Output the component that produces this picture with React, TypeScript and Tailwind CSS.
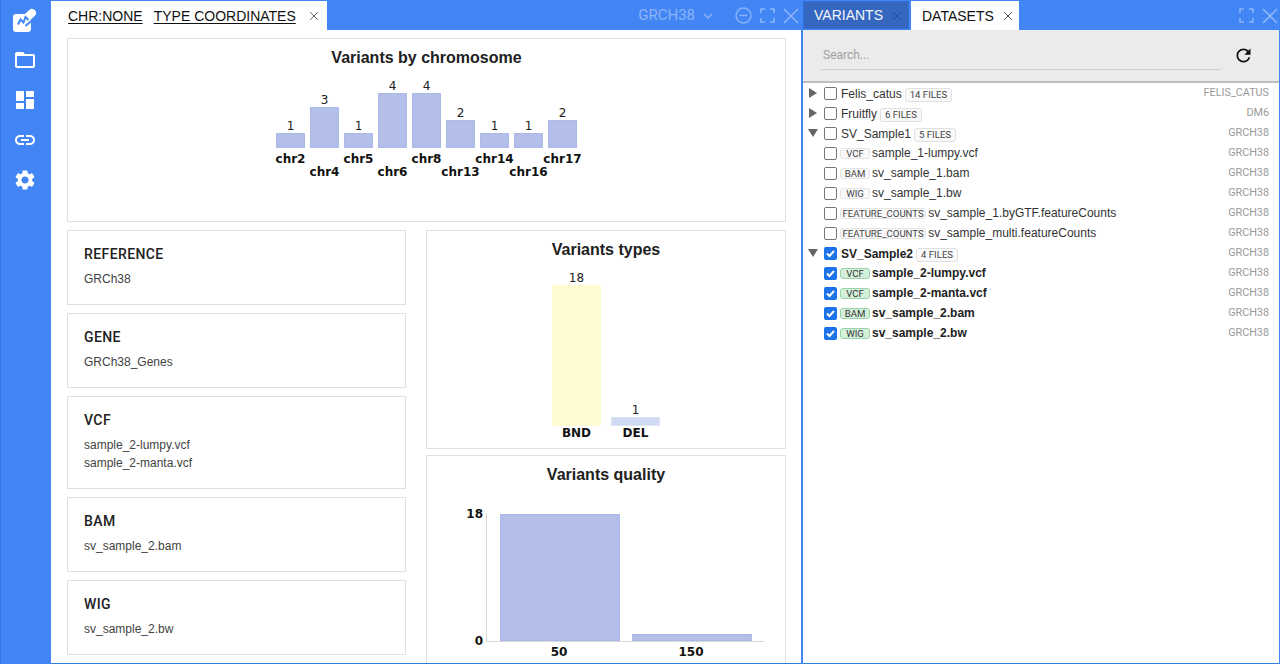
import { X } from 'lucide-react';

function Logo() {
  return (
    <svg width="24" height="24" viewBox="0 0 24 24">
      <rect x="0" y="6" width="18" height="18" rx="3" fill="#fff" />
      <path d="M9 14L19 5" stroke="#fff" strokeWidth="8" strokeLinecap="round" />
      <path d="M12.5 18L20.5 11" stroke="#4285f4" strokeWidth="2" />
      <path d="M5 16.5l2.5-5 3 3 2-5.5 3 3" fill="none" stroke="#4285f4" strokeWidth="2" />
    </svg>
  );
}

function NavIcon({ d }: { d: string }) {
  return (
    <svg width="24" height="24" viewBox="0 0 24 24" fill="#fff">
      <path d={d} />
    </svg>
  );
}

function FullscreenIcon() {
  return (
    <svg width="15" height="15" viewBox="0 0 15 15" fill="none" stroke="#8db4f8" strokeWidth="1.6">
      <path d="M1 5V1h4M10 1h4v4M14 10v4h-4M5 14H1v-4" />
    </svg>
  );
}

function CloseIcon() {
  return (
    <svg width="16" height="16" viewBox="0 0 16 16" fill="none" stroke="#8db4f8" strokeWidth="1.6">
      <path d="M1 1l14 14M15 1L1 15" />
    </svg>
  );
}

function Card({ title, items }: { title: string; items: string[] }) {
  return (
    <div className="border border-[#e0e0e0] px-4 pb-[16px] pt-[13px]">
      <div className="font-['Roboto'] text-[14px] font-medium leading-[20px] tracking-[0.4px] text-[#212121]">{title}</div>
      <div className="mt-[6px] text-[12px] leading-[18px] text-[#424242]">
        {items.map((i) => (
          <div key={i}>{i}</div>
        ))}
      </div>
    </div>
  );
}

const chrBars = [
  { v: 1, h: 15, l: 'chr2', low: false },
  { v: 3, h: 41, l: 'chr4', low: true },
  { v: 1, h: 15, l: 'chr5', low: false },
  { v: 4, h: 55, l: 'chr6', low: true },
  { v: 4, h: 55, l: 'chr8', low: false },
  { v: 2, h: 28, l: 'chr13', low: true },
  { v: 1, h: 15, l: 'chr14', low: false },
  { v: 1, h: 15, l: 'chr16', low: true },
  { v: 2, h: 28, l: 'chr17', low: false },
];

function ChrChart() {
  return (
    <div className="mt-[7px] flex justify-center gap-[5px]">
      {chrBars.map((b) => (
        <div key={b.l} className="flex w-[29px] flex-col items-center">
          <div className="flex h-[72px] w-full flex-col items-center justify-end">
            <div className="font-['DejaVu_Sans'] text-[12px] leading-[14px] text-[#212121]">{b.v}</div>
            <div className="w-full border border-[#adb9e6] bg-[#b3bfe8]" style={{ height: b.h }} />
          </div>
          <div
            className={`whitespace-nowrap font-['DejaVu_Sans'] text-[12px] font-bold leading-[14px] text-[#111] ${b.low ? 'mt-[17px]' : 'mt-[4px]'}`}
          >
            {b.l}
          </div>
        </div>
      ))}
    </div>
  );
}

function TypesChart() {
  return (
    <div className="ml-[125px] mt-[10px] flex gap-[10px]">
      <div className="flex w-[49px] flex-col items-center">
        <div className="font-['DejaVu_Sans'] text-[12px] leading-[14px] text-[#212121]">18</div>
        <div className="h-[141px] w-full bg-[#fffbd2]" />
        <div className="font-['DejaVu_Sans'] text-[12px] font-bold leading-[14px] text-[#111]">BND</div>
      </div>
      <div className="flex w-[49px] flex-col items-center justify-end">
        <div className="font-['DejaVu_Sans'] text-[12px] leading-[14px] text-[#212121]">1</div>
        <div className="h-[9px] w-full border border-[#dde4f6] bg-[#d0daf3]" />
        <div className="font-['DejaVu_Sans'] text-[12px] font-bold leading-[14px] text-[#111]">DEL</div>
      </div>
    </div>
  );
}

function QualityChart() {
  return (
    <div className="ml-[37px] mt-[27px] flex">
      <div className="flex h-[129px] w-[22px] flex-col justify-between pr-[3px] text-right font-['DejaVu_Sans'] text-[12px] font-bold leading-[14px] text-[#111]">
        <span className="-mt-[6px]">18</span>
        <span className="-mb-[6px]">0</span>
      </div>
      <div>
        <div className="flex h-[129px] w-[278px] items-end gap-[12px] border-b border-l border-[#d8d8d8] pl-[13px]">
          <div className="h-[127px] w-[120px] border border-[#adb9e6] bg-[#b3bfe8]" />
          <div className="h-[7px] w-[120px] border border-[#adb9e6] bg-[#b3bfe8]" />
        </div>
        <div className="mt-[3px] flex gap-[12px] pl-[13px] font-['DejaVu_Sans'] text-[12px] font-bold leading-[15px] text-[#111]">
          <span className="w-[120px] text-center">50</span>
          <span className="w-[120px] text-center">150</span>
        </div>
      </div>
    </div>
  );
}

type Row = {
  name: string;
  badge?: string;
  files?: string;
  ref: string;
  open?: boolean;
  checked?: boolean;
};

const rows: Row[] = [
  { name: 'Felis_catus', files: '14 FILES', ref: 'FELIS_CATUS', open: false },
  { name: 'Fruitfly', files: '6 FILES', ref: 'DM6', open: false },
  { name: 'SV_Sample1', files: '5 FILES', ref: 'GRCH38', open: true },
  { name: 'sample_1-lumpy.vcf', badge: 'VCF', ref: 'GRCH38' },
  { name: 'sv_sample_1.bam', badge: 'BAM', ref: 'GRCH38' },
  { name: 'sv_sample_1.bw', badge: 'WIG', ref: 'GRCH38' },
  { name: 'sv_sample_1.byGTF.featureCounts', badge: 'FEATURE_COUNTS', ref: 'GRCH38' },
  { name: 'sv_sample_multi.featureCounts', badge: 'FEATURE_COUNTS', ref: 'GRCH38' },
  { name: 'SV_Sample2', files: '4 FILES', ref: 'GRCH38', open: true, checked: true },
  { name: 'sample_2-lumpy.vcf', badge: 'VCF', ref: 'GRCH38', checked: true },
  { name: 'sample_2-manta.vcf', badge: 'VCF', ref: 'GRCH38', checked: true },
  { name: 'sv_sample_2.bam', badge: 'BAM', ref: 'GRCH38', checked: true },
  { name: 'sv_sample_2.bw', badge: 'WIG', ref: 'GRCH38', checked: true },
];

function Check({ on }: { on?: boolean }) {
  if (on) {
    return (
      <span className="flex h-[13px] w-[13px] shrink-0 items-center justify-center rounded-[2px] bg-[#1a73e8]">
        <svg width="11" height="11" viewBox="0 0 11 11" fill="none" stroke="#fff" strokeWidth="2">
          <path d="M2 5.5l2.5 2.5L9 3" />
        </svg>
      </span>
    );
  }
  return <span className="h-[13px] w-[13px] shrink-0 rounded-[2px] border border-[#767676] bg-white" />;
}

function TreeRow({ r }: { r: Row }) {
  return (
    <div className="flex h-[20px] items-center pl-[5px] pr-[10px]">
      <span className="flex w-[16px] shrink-0 items-center">
        {r.open === false && (
          <svg width="10" height="10" viewBox="0 0 10 10" fill="#666">
            <path d="M1 0l8 5-8 5z" />
          </svg>
        )}
        {r.open === true && (
          <svg width="10" height="10" viewBox="0 0 10 10" fill="#666">
            <path d="M0 1h10L5 9z" />
          </svg>
        )}
      </span>
      <Check on={r.checked} />
      {r.badge && (
        <span
          className={`ml-[3px] rounded-[3px] border font-['Roboto'] text-[9.6px] leading-[9px] ${r.badge === 'FEATURE_COUNTS' ? 'px-[1.5px]' : 'w-[30px] text-center'} ${
            r.checked ? 'border-[#9bd3a9] bg-[#d4f0da] text-[#333]' : 'border-[#e4e4e4] bg-[#f8f8f8] text-[#444]'
          }`}
        >
          {r.badge}
        </span>
      )}
      <span
        className={`${r.badge ? 'ml-[2px]' : 'ml-[4px] translate-y-px'} whitespace-nowrap text-[12px] ${r.checked ? 'font-bold text-[#222]' : 'text-[#333]'}`}
      >
        {r.name}
      </span>
      {r.files && (
        <span className="ml-[3px] translate-y-[2px] rounded-[3px] border border-[#e0e0e0] bg-[#fafafa] px-[4px] font-['Roboto'] text-[9.6px] leading-[12px] text-[#444]">
          {r.files}
        </span>
      )}
      <span className="ml-auto font-['Roboto'] text-[10.8px] text-[#9a9a9a]">{r.ref}</span>
    </div>
  );
}

export default function App() {
  return (
    <div className="flex h-[664px] w-[1280px] overflow-hidden bg-[#4285f4] font-['Liberation_Sans',sans-serif]">
      {/* nav rail */}
      <div className="flex w-[51px] shrink-0 flex-col items-center gap-[16px] border-l border-[#2f74e6] pr-[2px] pt-[8px]">
        <Logo />
        <NavIcon d="M20 6h-8l-2-2H4c-1.1 0-2 .9-2 2v12c0 1.1.9 2 2 2h16c1.1 0 2-.9 2-2V8c0-1.1-.9-2-2-2zm0 12H4V8h16v10z" />
        <NavIcon d="M3 13h8V3H3v10zm0 8h8v-6H3v6zm10 0h8V11h-8v10zm0-18v6h8V3h-8z" />
        <NavIcon d="M3.9 12c0-1.71 1.39-3.1 3.1-3.1h4V7H7c-2.76 0-5 2.24-5 5s2.24 5 5 5h4v-1.9H7c-1.71 0-3.1-1.39-3.1-3.1zM8 13h8v-2H8v2zm9-6h-4v1.9h4c1.71 0 3.1 1.39 3.1 3.1s-1.39 3.1-3.1 3.1h-4V17h4c2.76 0 5-2.24 5-5s-2.24-5-5-5z" />
        <NavIcon d="M19.14 12.94c.04-.3.06-.61.06-.94 0-.32-.02-.64-.07-.94l2.03-1.58a.49.49 0 0 0 .12-.61l-1.92-3.32a.49.49 0 0 0-.59-.22l-2.39.96c-.5-.38-1.03-.7-1.62-.94l-.36-2.54a.48.48 0 0 0-.48-.41h-3.84c-.24 0-.43.17-.47.41l-.36 2.54c-.59.24-1.13.57-1.62.94l-2.39-.96c-.22-.08-.47 0-.59.22L2.74 8.87c-.12.21-.08.47.12.61l2.03 1.58c-.05.3-.09.63-.09.94s.02.64.07.94l-2.03 1.58a.49.49 0 0 0-.12.61l1.92 3.32c.12.22.37.29.59.22l2.39-.96c.5.38 1.03.7 1.62.94l.36 2.54c.05.24.24.41.48.41h3.84c.24 0 .44-.17.47-.41l.36-2.54c.59-.24 1.13-.56 1.62-.94l2.39.96c.22.08.47 0 .59-.22l1.92-3.32c.12-.22.07-.47-.12-.61l-2.01-1.58zM12 15.6c-1.98 0-3.6-1.62-3.6-3.6s1.62-3.6 3.6-3.6 3.6 1.62 3.6 3.6-1.62 3.6-3.6 3.6z" />
      </div>

      {/* main panel */}
      <div className="flex w-[750px] shrink-0 flex-col">
        <div className="flex h-[30px] shrink-0 items-end">
          <div className="flex h-[29px] w-[276px] items-center bg-white pl-[17px] pt-[1px] text-[14px] text-[#111]">
            <span className="underline underline-offset-2">CHR:NONE</span>
            <span className="ml-[11px] underline underline-offset-2">TYPE COORDINATES</span>
            <X size={14} strokeWidth={1.3} className="ml-[11px] text-[#333]" />
          </div>
          <div className="ml-auto flex h-[30px] items-center pr-[2px] pt-[1px] text-[#8db4f8]">
            <span className="font-['Roboto'] text-[15px]">GRCH38</span>
            <svg width="12" height="12" viewBox="0 0 12 12" fill="none" stroke="#8db4f8" strokeWidth="1.3" className="ml-[7px]">
              <path d="M2 4l4 4 4-4" />
            </svg>
            <svg width="17" height="17" viewBox="0 0 17 17" fill="none" stroke="#8db4f8" strokeWidth="1.4" className="ml-[21px]">
              <circle cx="8.5" cy="8.5" r="7.5" />
              <path d="M4.5 8.5h8" />
            </svg>
            <span className="ml-[8px]">
              <FullscreenIcon />
            </span>
            <span className="ml-[8px]">
              <CloseIcon />
            </span>
          </div>
        </div>

        <div className="min-h-0 flex-1 overflow-hidden border-b border-[#2b80dc] bg-white px-4 pt-2">
          <div className="-mr-[1px] h-[184px] border border-[#e0e0e0] pt-[8px]">
            <div className="text-center text-[16px] font-bold leading-[22px] text-[#212121]">Variants by chromosome</div>
            <ChrChart />
          </div>
          <div className="mt-[8px] flex gap-[20px]">
            <div className="flex w-[339px] shrink-0 flex-col gap-[8px]">
              <Card title="REFERENCE" items={['GRCh38']} />
              <Card title="GENE" items={['GRCh38_Genes']} />
              <Card title="VCF" items={['sample_2-lumpy.vcf', 'sample_2-manta.vcf']} />
              <Card title="BAM" items={['sv_sample_2.bam']} />
              <Card title="WIG" items={['sv_sample_2.bw']} />
            </div>
            <div className="flex w-[360px] shrink-0 flex-col gap-[6px]">
              <div className="h-[219px] border border-[#e0e0e0] pt-[8px]">
                <div className="text-center text-[16px] font-bold leading-[22px] text-[#212121]">Variants types</div>
                <TypesChart />
              </div>
              <div className="h-[240px] border border-[#e0e0e0] pt-[8px]">
                <div className="text-center text-[16px] font-bold leading-[22px] text-[#212121]">Variants quality</div>
                <QualityChart />
              </div>
            </div>
          </div>
        </div>
      </div>

      {/* right panel */}
      <div className="ml-[2px] flex min-w-0 flex-1 flex-col">
        <div className="flex h-[30px] shrink-0 items-end">
          <div className="mb-[1px] flex h-[28px] w-[106px] items-center border border-[#2f6fd8] bg-[#3566c0] pl-[10px] pt-[1px] text-[14px] text-[#f4f6fb]">
            VARIANTS
            <X size={14} strokeWidth={1.3} className="ml-[7px] text-[#1f3f7f]" />
          </div>
          <div className="ml-[2px] flex h-[29px] w-[108px] items-center bg-white pl-[11px] pt-[1px] text-[14px] text-[#111]">
            DATASETS
            <X size={14} strokeWidth={1.3} className="ml-[7px] text-[#222]" />
          </div>
          <div className="ml-auto flex h-[30px] items-center gap-[8px] pr-[2px] pt-[1px]">
            <FullscreenIcon />
            <CloseIcon />
          </div>
        </div>
        <div className="mr-px flex min-h-0 flex-1 flex-col border-b border-[#2b80dc] bg-white">
          <div className="relative h-[53px] shrink-0 border-b-2 border-[#bdbdbd] bg-[#ebebeb]">
            <div className="ml-[18px] mt-[18px] w-[400px] border-b border-[#cfcfcf] pb-[7px] pl-[2px] font-['Roboto'] text-[12px] leading-[14px] text-[#a0a0a0]">
              Search...
            </div>
            <svg width="21" height="21" viewBox="0 0 24 24" fill="#111" className="absolute right-[25px] top-[15px]">
              <path d="M17.65 6.35A7.958 7.958 0 0 0 12 4c-4.42 0-7.99 3.58-7.99 8s3.57 8 7.99 8c3.73 0 6.84-2.55 7.73-6h-2.08A5.99 5.99 0 0 1 12 18c-3.31 0-6-2.69-6-6s2.69-6 6-6c1.66 0 3.14.69 4.22 1.78L13 11h7V4l-2.35 2.35z" />
            </svg>
          </div>
          <div>
            {rows.map((r) => (
              <TreeRow key={r.name} r={r} />
            ))}
          </div>
        </div>
      </div>
    </div>
  );
}
